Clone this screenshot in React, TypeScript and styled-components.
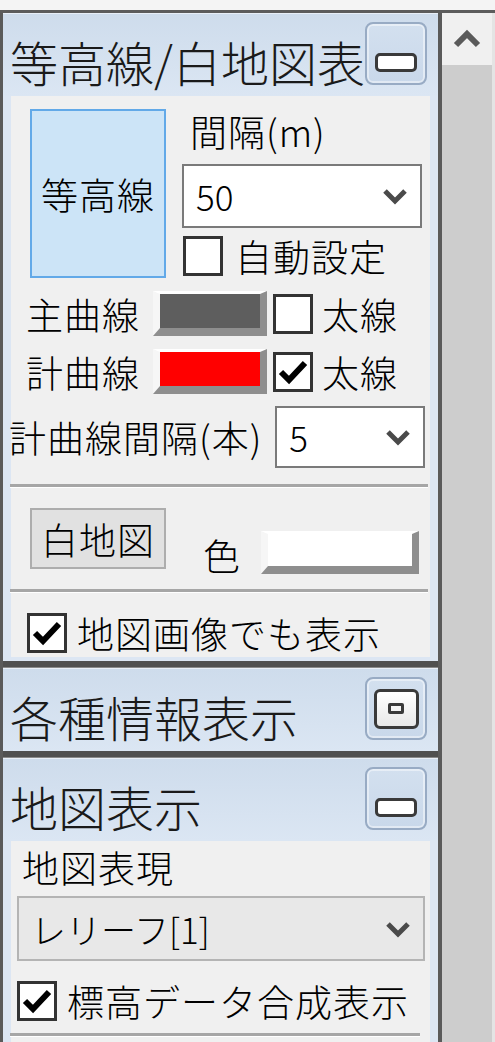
import React from 'react';
import styled, { createGlobalStyle } from 'styled-components';

const GlobalStyle = createGlobalStyle`
    html, body {
        margin: 0;
        padding: 0;
        background: #f0f0f0;
    }
    body {
        font-family: "Noto Sans CJK JP", "Noto Sans", sans-serif;
        color: #000;
    }
`;

const Page = styled.div`
    width: 495px;
    height: 1042px;
    overflow: hidden;
    background: #f4f4f4;
    padding-top: 10px;
    box-sizing: border-box;
`;

const Frame = styled.div`
    display: flex;
    height: 1032px;
    border-top: 3px solid #5c5c5c;
`;

const PanelColumn = styled.div`
    width: 442px;
    box-sizing: border-box;
    border-left: 3px solid #5a5a5a;
    border-right: 4px solid #5a5a5a;
    display: flex;
    flex-direction: column;
    overflow: hidden;
`;

const Section = styled.div`
    display: flex;
    flex-direction: column;
    flex-shrink: 0;
    background: #dce6f3;
`;

const SectionGap = styled.div`
    flex-shrink: 0;
    height: 6px;
    background: #505050;
    border-bottom: 1px solid #8a8a8a;
`;

const Header = styled.div`
    display: flex;
    align-items: flex-start;
    flex-shrink: 0;
    height: 83px;
    padding: 0 11px 0 7px;
    background: linear-gradient(#cedcec, #dbe6f3);
    border-top: 1px solid #e8eff8;
    box-sizing: border-box;
`;

const Title = styled.div`
    flex: 1;
    min-width: 0;
    margin-top: 12px;
    font-size: 48px;
    line-height: 70px;
    font-weight: 300;
    color: #1a1a1a;
    white-space: nowrap;
    overflow: hidden;
`;

const HeaderButton = styled.div`
    flex-shrink: 0;
    width: 62px;
    height: 63px;
    margin-top: 8px;
    box-sizing: border-box;
    border: 2px solid #98abc4;
    border-radius: 8px;
    box-shadow: inset 0 0 0 2px rgba(255, 255, 255, 0.45);
    background: linear-gradient(#d3e0ef, #c9d8ea);
    display: flex;
    align-items: center;
    justify-content: center;
`;

const MinimizeBar = styled.div`
    width: 42px;
    height: 19px;
    margin-top: 18px;
    box-sizing: border-box;
    border: 3px solid #3a3a3a;
    border-radius: 5px;
    background: #fff;
`;

const RestoreBox = styled.div`
    width: 45px;
    height: 40px;
    box-sizing: border-box;
    border: 3px solid #3a3a3a;
    border-radius: 6px;
    background: linear-gradient(#ffffff, #e8e8e8);
    display: flex;
    align-items: center;
    justify-content: center;
`;

const RestoreInner = styled.div`
    width: 16px;
    height: 11px;
    box-sizing: border-box;
    border: 3px solid #3a3a3a;
    border-radius: 2px;
`;

const Body = styled.div<{ $height: number }>`
    flex-shrink: 0;
    margin: 0 8px 4px;
    height: ${p => p.$height}px;
    background: #f0f0f0;
    display: flex;
    flex-direction: column;
    font-size: 37px;
    line-height: 40px;
    font-weight: 300;
    letter-spacing: 1px;
`;

const Row = styled.div<{ $top: number; $align?: string }>`
    display: flex;
    align-items: ${p => p.$align || 'center'};
    margin-top: ${p => p.$top}px;
`;

const ToggleButton = styled.div`
    width: 136px;
    height: 169px;
    margin-left: 19px;
    box-sizing: border-box;
    border: 2px solid #62a9e8;
    background: #cce4f7;
    display: flex;
    align-items: center;
    justify-content: center;
`;

const PushButton = styled.div`
    width: 136px;
    height: 61px;
    margin-left: 19px;
    box-sizing: border-box;
    border: 2px solid #adadad;
    background: #e1e1e1;
    display: flex;
    align-items: center;
    justify-content: center;
`;

const Column = styled.div`
    display: flex;
    flex-direction: column;
    margin-left: 16px;
    width: 240px;
`;

const Label = styled.span<{ $left?: number; $width?: number }>`
    margin-left: ${p => p.$left || 0}px;
    ${p => (p.$width ? `width: ${p.$width}px; text-align: right;` : '')}
    white-space: nowrap;
`;

const Combo = styled.div<{ $width: number; $height: number; $left?: number; $readonly?: boolean }>`
    flex-shrink: 0;
    width: ${p => p.$width}px;
    height: ${p => p.$height}px;
    margin-left: ${p => p.$left || 0}px;
    box-sizing: border-box;
    border: 2px solid ${p => (p.$readonly ? '#b4b4b4' : '#7a7a7a')};
    background: ${p => (p.$readonly ? '#e8e8e8' : '#fff')};
    display: flex;
    align-items: center;
    justify-content: space-between;
    padding: 0 12px 0 12px;
    font-size: 35px;
    letter-spacing: 0;
`;

const Box = styled.div<{ $left?: number }>`
    width: 40px;
    height: 40px;
    flex-shrink: 0;
    margin-left: ${p => p.$left || 0}px;
    box-sizing: border-box;
    border: 3px solid #333;
    background: #fff;
    display: flex;
    align-items: center;
    justify-content: center;
`;

const ColorButton = styled.div<{ $color: string; $width: number; $height: number; $left?: number }>`
    flex-shrink: 0;
    width: ${p => p.$width}px;
    height: ${p => p.$height}px;
    margin-left: ${p => p.$left || 0}px;
    box-sizing: border-box;
    border-style: solid;
    border-width: 3px 7px 8px 7px;
    border-color: #ffffff #8e8e8e #8e8e8e #f6f6f6;
    background: ${p => p.$color};
`;

const Separator = styled.div<{ $top: number; $right?: number }>`
    margin: ${p => p.$top}px ${p => p.$right ?? 2}px 0 -1px;
    border-top: 3px solid #a6a6a6;
    border-bottom: 1px solid #ffffff;
`;

const Scrollbar = styled.div`
    width: 50px;
    display: flex;
    flex-direction: column;
    background: #f0f0f0;
`;

const ScrollArrow = styled.div`
    height: 52px;
    display: flex;
    align-items: center;
    justify-content: center;
`;

const ScrollThumb = styled.div`
    flex: 1;
    background: #cdcdcd;
`;

const RightEdge = styled.div`
    width: 3px;
    background: #e4e4e4;
`;

const Chevron = () => (
    <svg width="26" height="18" viewBox="0 0 26 18">
        <path d="M3 4 L13 14 L23 4" fill="none" stroke="#4a4a4a" strokeWidth="5" />
    </svg>
);

const CheckBox: React.FC<{ checked?: boolean; left?: number }> = ({ checked, left }) => (
    <Box $left={left}>
        {checked && (
            <svg width="30" height="28" viewBox="0 0 30 28">
                <path d="M3 14 L11 22 L27 5" fill="none" stroke="#000" strokeWidth="6" />
            </svg>
        )}
    </Box>
);

const App: React.FC = () => {
    return (
        <>
            <GlobalStyle />
            <Page>
                <Frame>
                    <PanelColumn>
                        <Section>
                            <Header>
                                <Title>等高線/白地図表示</Title>
                                <HeaderButton>
                                    <MinimizeBar />
                                </HeaderButton>
                            </Header>
                            <Body $height={561}>
                                <Row $top={13} $align="flex-start">
                                    <ToggleButton>等高線</ToggleButton>
                                    <Column>
                                        <Label $left={8} style={{ marginTop: 2 }}>間隔(m)</Label>
                                        <Combo $width={240} $height={64} style={{ marginTop: 13 }}>
                                            <span>50</span>
                                            <Chevron />
                                        </Combo>
                                        <Row $top={8}>
                                            <CheckBox left={1} />
                                            <Label $left={12}>自動設定</Label>
                                        </Row>
                                    </Column>
                                </Row>
                                <Row $top={13} style={{ height: 45 }}>
                                    <Label $left={14} $width={115}>主曲線</Label>
                                    <ColorButton $color="#5e5e5e" $width={114} $height={45} $left={13} />
                                    <CheckBox left={6} />
                                    <Label $left={9}>太線</Label>
                                </Row>
                                <Row $top={13} style={{ height: 45 }}>
                                    <Label $left={14} $width={115}>計曲線</Label>
                                    <ColorButton $color="#ff0000" $width={114} $height={45} $left={13} />
                                    <CheckBox checked left={6} />
                                    <Label $left={9}>太線</Label>
                                </Row>
                                <Row $top={12}>
                                    <Label $left={-2}>計曲線間隔(本)</Label>
                                    <Combo $width={150} $height={62} $left={13}>
                                        <span>5</span>
                                        <Chevron />
                                    </Combo>
                                </Row>
                                <Separator $top={16} />
                                <Row $top={20} $align="flex-start">
                                    <PushButton>白地図</PushButton>
                                    <Label $left={37} style={{ marginTop: 27 }}>色</Label>
                                    <ColorButton $color="#ffffff" $width={158} $height={43} $left={20} style={{ marginTop: 23 }} />
                                </Row>
                                <Separator $top={14} />
                                <Row $top={20}>
                                    <CheckBox checked left={16} />
                                    <Label $left={10}>地図画像でも表示</Label>
                                </Row>
                            </Body>
                        </Section>
                        <SectionGap />
                        <Section>
                            <Header>
                                <Title>各種情報表示</Title>
                                <HeaderButton>
                                    <RestoreBox>
                                        <RestoreInner />
                                    </RestoreBox>
                                </HeaderButton>
                            </Header>
                        </Section>
                        <SectionGap />
                        <Section>
                            <Header>
                                <Title>地図表示</Title>
                                <HeaderButton>
                                    <MinimizeBar />
                                </HeaderButton>
                            </Header>
                            <Body $height={220}>
                                <Row $top={6}>
                                    <Label $left={11}>地図表現</Label>
                                </Row>
                                <Combo $readonly $width={408} $height={65} $left={6} style={{ marginTop: 9 }}>
                                    <span>レリーフ[1]</span>
                                    <Chevron />
                                </Combo>
                                <Row $top={20}>
                                    <CheckBox checked left={6} />
                                    <Label $left={10}>標高データ合成表示</Label>
                                </Row>
                                <Separator $top={12} $right={10} />
                            </Body>
                        </Section>
                    </PanelColumn>
                    <Scrollbar>
                        <ScrollArrow>
                            <svg width="30" height="22" viewBox="0 0 30 22">
                                <path d="M4 17 L15 6 L26 17" fill="none" stroke="#5a5a5a" strokeWidth="6" />
                            </svg>
                        </ScrollArrow>
                        <ScrollThumb />
                    </Scrollbar>
                    <RightEdge />
                </Frame>
            </Page>
        </>
    );
};

export default App;
